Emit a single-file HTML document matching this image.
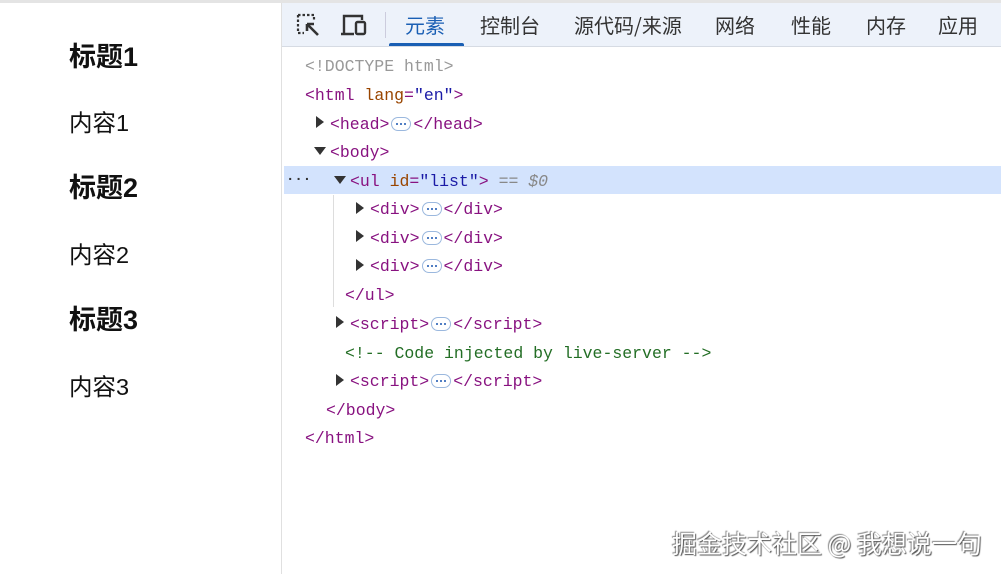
<!DOCTYPE html>
<html><head><meta charset="utf-8"><style>
body{margin:0;width:1001px;height:574px;position:relative;background:#fff;overflow:hidden;font-family:"Liberation Sans","Noto Sans CJK SC",sans-serif}
.topline{position:absolute;left:0;top:0;width:1001px;height:3px;background:#e4e4e4}
.left{position:absolute;left:0;top:3px;width:281px;height:571px;border-right:1px solid #e0e0e0}
.h{position:absolute;left:69px;font-size:27px;font-weight:bold;color:#111}
.c{position:absolute;left:69px;font-size:23.5px;color:#111}
.bar{position:absolute;left:282px;top:3px;width:719px;height:43px;background:#edf2fa;border-bottom:1px solid #d6dbe3}
.tab{position:absolute;top:10px;font-size:20px;color:#333;font-family:"Noto Sans CJK SC",sans-serif;line-height:24px}
.code{position:absolute;font-family:"Liberation Mono",monospace;font-size:16.5px;line-height:20px;white-space:pre;color:#881280}
.g{color:#999}.t{color:#881280}.a{color:#994500}.v{color:#1a1aa6}.cm{color:#236e25}
.tri{position:absolute;width:0;height:0}
.tr{border-top:6px solid transparent;border-bottom:6px solid transparent;border-left:8px solid #333}
.td{border-left:6px solid transparent;border-right:6px solid transparent;border-top:8px solid #333}
.dots{display:inline-block;width:20px;height:14px;border:1px solid #9bb8de;border-radius:7px;vertical-align:-2px;margin:0 2px;position:relative;box-sizing:border-box}
.dots:after{content:"";position:absolute;left:4px;top:5px;width:2px;height:2px;background:#1a56b0;box-shadow:4px 0 #1a56b0,8px 0 #1a56b0;border-radius:1px}
</style></head><body>
<div class="topline"></div>
<div class="left">
<div class="h" style="top:32px">标题1</div>
<div class="c" style="top:101px">内容1</div>
<div class="h" style="top:163px">标题2</div>
<div class="c" style="top:233px">内容2</div>
<div class="h" style="top:295px">标题3</div>
<div class="c" style="top:365px">内容3</div>
</div>
<div class="bar">
<svg style="position:absolute;left:14px;top:10px" width="26" height="26" viewBox="0 0 26 26"><path d="M2 2h16v5M2 2v18h6" fill="none" stroke="#333" stroke-width="2.2" stroke-dasharray="2.5 2"/><path d="M11 11l11 11M11 11v7M11 11h7" stroke="#333" stroke-width="2.6" fill="none"/></svg>
<svg style="position:absolute;left:58px;top:10px" width="30" height="26" viewBox="0 0 30 26"><path d="M4 20V3h18v4M1 21h13" stroke="#333" stroke-width="2.4" fill="none"/><rect x="16" y="9" width="9" height="12" rx="1.5" stroke="#333" stroke-width="2.4" fill="none"/></svg>
<div style="position:absolute;left:103px;top:9px;width:1px;height:26px;background:#ccd"></div>
<div class="tab" style="left:123px;color:#1a5fb4">元素</div>
<div style="position:absolute;left:107px;top:40px;width:75px;height:3px;background:#1a5fb4;border-radius:2px 2px 0 0"></div>
<div class="tab" style="left:198px">控制台</div>
<div class="tab" style="left:292px">源代码/来源</div>
<div class="tab" style="left:433px">网络</div>
<div class="tab" style="left:509px">性能</div>
<div class="tab" style="left:584px">内存</div>
<div class="tab" style="left:656px">应用</div>
</div>
<div style="position:absolute;left:284px;top:166px;width:717px;height:28px;background:#d3e3fd"></div>
<div style="position:absolute;left:333px;top:195px;width:1px;height:112px;background:#ddd"></div>
<div class="code g" style="left:305px;top:57px">&lt;!DOCTYPE html&gt;</div>
<div class="code" style="left:305px;top:86px">&lt;html <span class="a">lang</span>=<span class="v">"en"</span>&gt;</div>
<div class="tri tr" style="left:316px;top:116px"></div>
<div class="code" style="left:330px;top:115px">&lt;head&gt;<span class="dots"></span>&lt;/head&gt;</div>
<div class="tri td" style="left:314px;top:147px"></div>
<div class="code" style="left:330px;top:143px">&lt;body&gt;</div>
<div class="code" style="left:286px;top:170px;color:#333;font-weight:bold;font-size:14px">···</div>
<div class="tri td" style="left:334px;top:176px"></div>
<div class="code" style="left:350px;top:172px">&lt;ul <span class="a">id</span>=<span class="v">"list"</span>&gt; <span style="color:#888;font-style:italic">== $0</span></div>
<div class="tri tr" style="left:356px;top:202px"></div>
<div class="code" style="left:370px;top:200px">&lt;div&gt;<span class="dots"></span>&lt;/div&gt;</div>
<div class="tri tr" style="left:356px;top:230px"></div>
<div class="code" style="left:370px;top:229px">&lt;div&gt;<span class="dots"></span>&lt;/div&gt;</div>
<div class="tri tr" style="left:356px;top:259px"></div>
<div class="code" style="left:370px;top:257px">&lt;div&gt;<span class="dots"></span>&lt;/div&gt;</div>
<div class="code" style="left:345px;top:286px">&lt;/ul&gt;</div>
<div class="tri tr" style="left:336px;top:316px"></div>
<div class="code" style="left:350px;top:315px">&lt;script&gt;<span class="dots"></span>&lt;/script&gt;</div>
<div class="code cm" style="left:345px;top:344px">&lt;!-- Code injected by live-server --&gt;</div>
<div class="tri tr" style="left:336px;top:374px"></div>
<div class="code" style="left:350px;top:372px">&lt;script&gt;<span class="dots"></span>&lt;/script&gt;</div>
<div class="code" style="left:326px;top:401px">&lt;/body&gt;</div>
<div class="code" style="left:305px;top:429px">&lt;/html&gt;</div>
<div style="position:absolute;left:672px;top:527px;font-size:25px;color:#fff;font-family:'Noto Sans CJK SC',sans-serif;text-shadow:1px 1px 1px #555,-1px -1px 1px #888;line-height:32px">掘金技术社区 @ 我想说一句</div>
</body></html>
